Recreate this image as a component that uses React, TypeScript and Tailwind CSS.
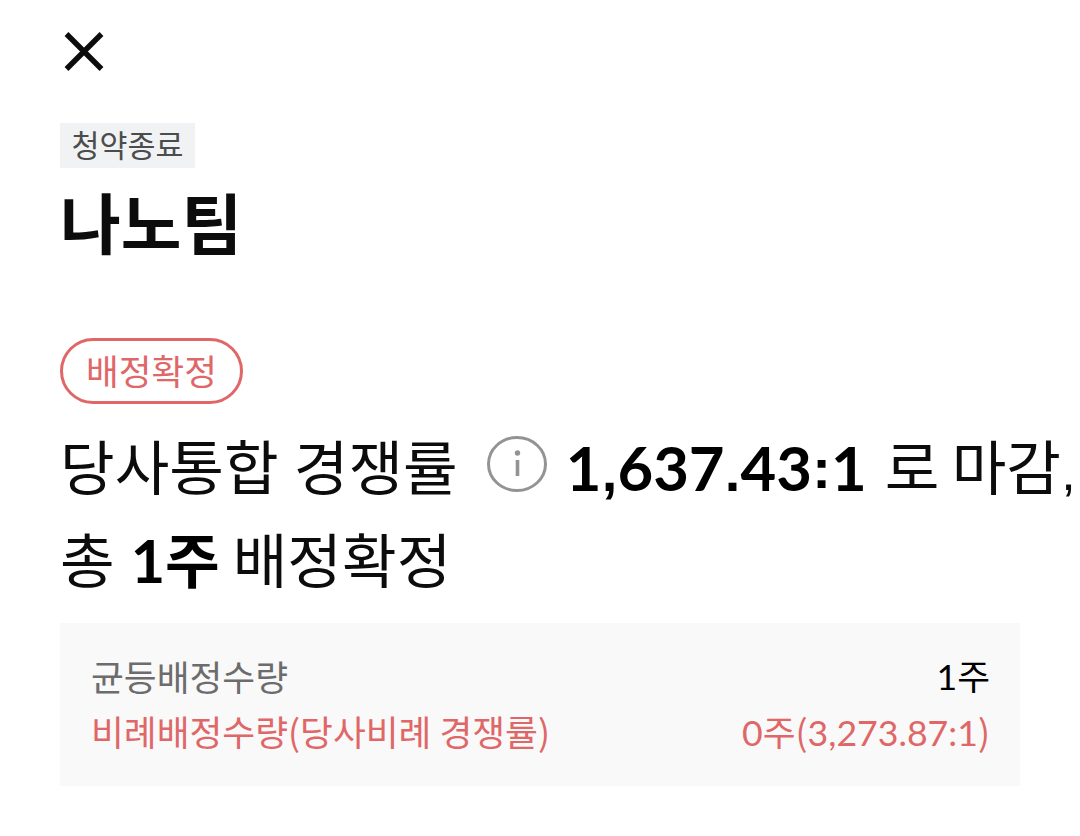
import type { ReactNode } from 'react';

function Row({ label, children, className }: { label: string; children: ReactNode; className: string }) {
  return (
    <div className={`flex h-[55px] items-center justify-between text-[35.7px] ${className}`}>
      <span className="-mt-[3px] font-['Noto_Sans_CJK_KR',sans-serif]">{label}</span>
      <span className="-mr-px -mt-[2px]">{children}</span>
    </div>
  );
}

// Square punctuation set between the rounder Lato digits
function Mark({ children, className = '' }: { children: string; className?: string }) {
  return <span className={`inline-block text-center font-['Liberation_Sans',sans-serif] ${className}`}>{children}</span>;
}

function InfoIcon() {
  return (
    <svg className="relative -top-[4px] ml-[29px] mr-[19px] shrink-0" width="60" height="56" viewBox="0 0 60 56" fill="none">
      <ellipse cx="30" cy="28" rx="28.5" ry="26.5" stroke="#939393" strokeWidth="3" />
      <path d="M30.5 24V40" stroke="#939393" strokeWidth="3.6" />
      <circle cx="30.5" cy="17" r="2.7" fill="#939393" />
    </svg>
  );
}

export default function App() {
  return (
    <main className="h-[836px] w-[1080px] overflow-hidden whitespace-nowrap bg-white pl-[60px] pt-[32px] font-['Lato','Noto_Sans_CJK_KR',sans-serif] text-[#0c0c0c]">
      <button className="ml-[4px] block" aria-label="닫기">
        <svg width="40" height="40" viewBox="0 0 40 40" fill="none" stroke="#0c0c0c" strokeWidth="5.4">
          <path d="M2.5 2L37.5 37M37.5 2L2.5 37" />
        </svg>
      </button>
      <div className="mt-[51px] flex h-[45px] w-[135px] items-center justify-center bg-[#f0f2f4] text-[30.4px] text-[#4c4c4c]">청약종료</div>
      <h1 className="mt-[11px] h-[90px] text-[66px] font-bold leading-[90px]">나노팀</h1>
      <div className="mt-[69px] flex h-[66px] w-[183px] items-center justify-center rounded-full border-[3px] border-[#df6767] pt-[2px] text-[35.6px] text-[#df6767]">배정확정</div>
      <div className="mt-[17px] text-[59.4px]">
        <p className="flex h-[93px] items-center">
          <span>당사통합 경쟁률</span>
          <InfoIcon />
          <b className="text-[61.6px] text-black">
            1<Mark className="w-[16px] text-[56px]">,</Mark>637<Mark className="w-[16px] text-[56px]">.</Mark>43
            <Mark className="relative -top-[3px] w-[19px] text-[56px]">:</Mark>1
          </b>
          <span className="ml-[18px] [word-spacing:-3px]">로 마감<Mark className="w-[15px] text-[52px]">,</Mark></span>
        </p>
        <p className="flex h-[93px] items-center">
          <span>총</span>
          <b className="ml-[16px] text-black">1주</b>
          <span className="ml-[13px]">배정확정</span>
        </p>
      </div>
      <section className="mt-[16px] h-[163px] w-[960px] bg-[#f9f9f9] px-[31px] pt-[27px]">
        <Row label="균등배정수량" className="text-[#6c6c6c]"><span className="text-black">1주</span></Row>
        <Row label="비례배정수량(당사비례 경쟁률)" className="text-[#df6767]">
          0주<span className="font-['Noto_Sans_CJK_KR',sans-serif]">(</span>3,273.87:1<span className="font-['Noto_Sans_CJK_KR',sans-serif]">)</span>
        </Row>
      </section>
    </main>
  );
}
